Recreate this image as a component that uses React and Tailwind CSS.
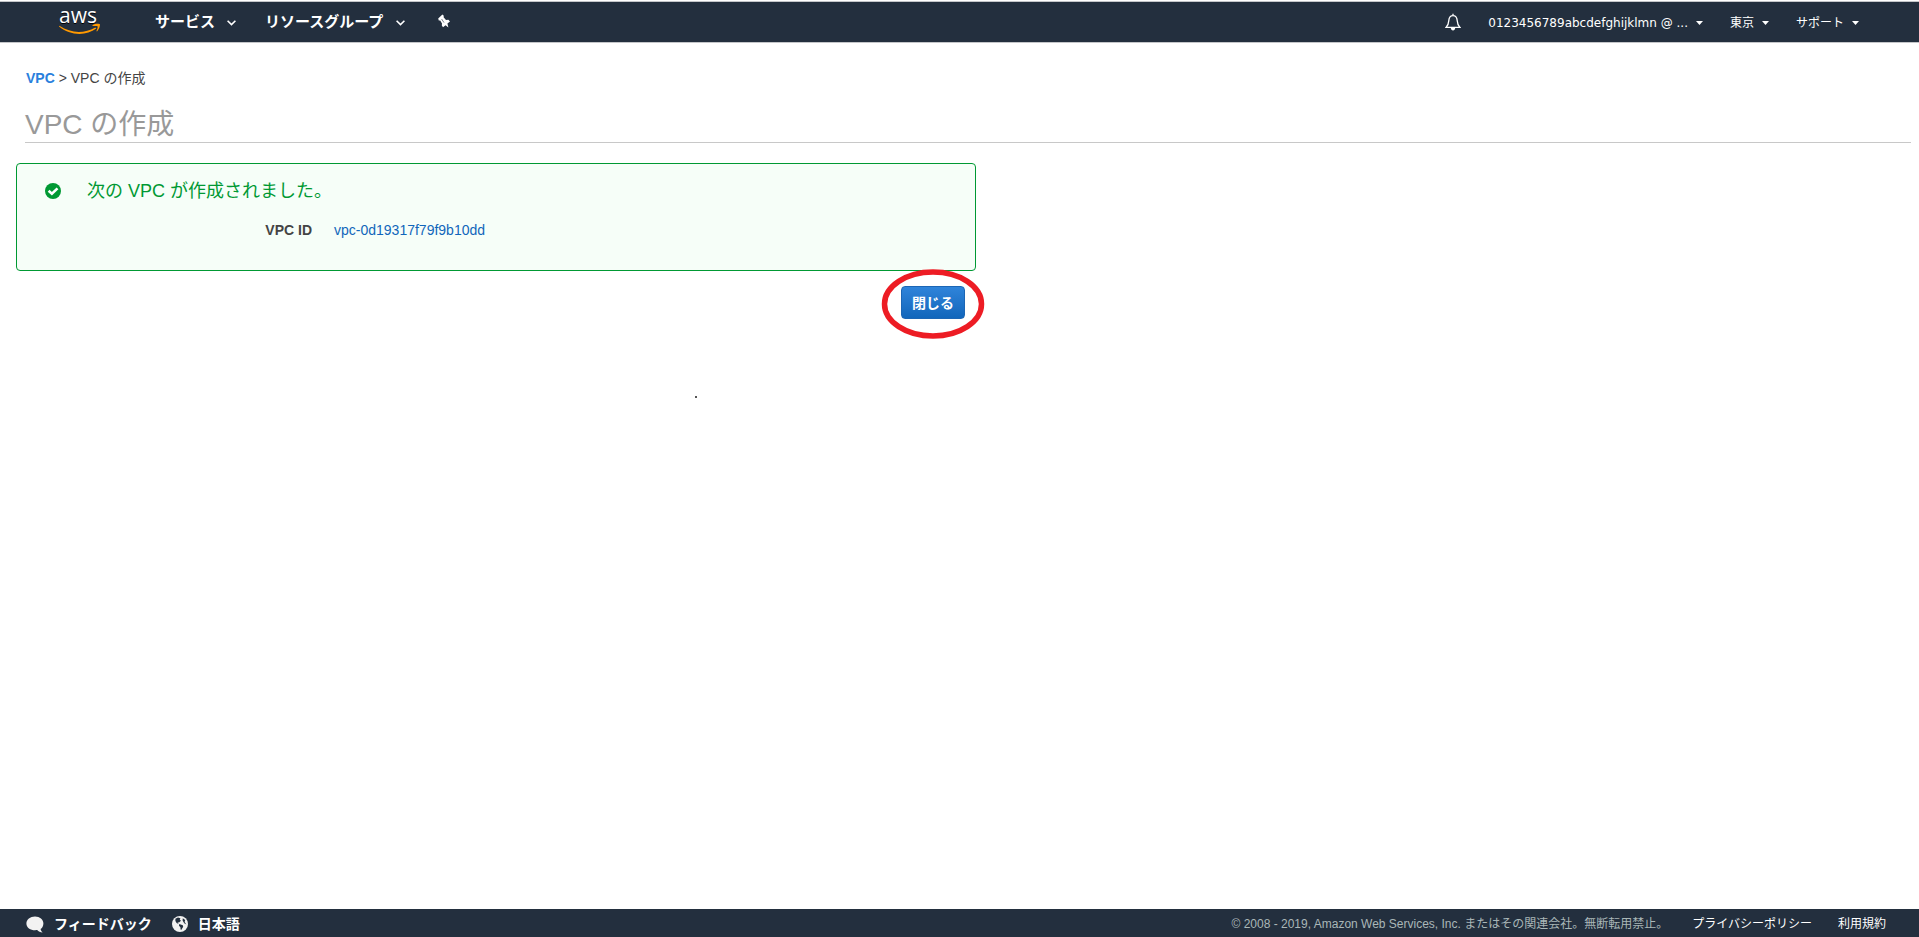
const navFont = "font-['Noto_Sans_CJK_JP',sans-serif]";
const accountFont = "font-['DejaVu_Sans','Noto_Sans_CJK_JP',sans-serif]";

function AwsLogo() {
    return (
        <svg viewBox="0 -4 44 42" className="h-[42px] w-11 overflow-visible font-normal" role="img" aria-label="aws">
            <text x="0" y="19" fill="#fff" fontSize="21" fontFamily="Open Sans, sans-serif">aws</text>
            <path d="M0.4 21.8 C12 29.4 25 29.8 36.3 23.4 L37.3 24.6 C27 32.4 11 31.8 0 22.6 Z" fill="#f90" />
            <path d="M33.4 21.2 C36 19.4 40.4 19.4 40.9 20.3 C41.3 21.2 40.2 25.4 38 27.4 L37.4 26.9 C38.4 25 39 22.8 38.6 22.3 C38.1 21.8 36 21.8 33.6 22.1 Z" fill="#f90" />
        </svg>
    );
}

function Chevron() {
    return (
        <svg viewBox="0 0 9 6" className="mt-1 h-1.5 w-[9px]" fill="none" stroke="#fff" strokeWidth="1.6">
            <path d="M0.6 0.8 L4.5 4.6 L8.4 0.8" />
        </svg>
    );
}

function Caret() {
    return (
        <svg viewBox="0 0 7 4" className="h-1 w-[7px]" fill="#fff">
            <path d="M0 0 H7 L3.5 4 Z" />
        </svg>
    );
}

function PinIcon() {
    return (
        <svg viewBox="0 0 14 14" className="h-3.5 w-3.5" fill="#fff">
            <path d="M1.2 4.4 L5.4 0.6 L6.8 1.8 L6.6 3.2 L9 6 L11.4 5.8 L13 7.4 L10.4 9.6 L11.4 13.6 L8.6 11.2 L6 13.2 L4.8 11.6 L5 9.6 L3.2 6.6 L1.8 6.4 Z" />
            <path d="M4.6 5 L7 8.6" fill="none" stroke="#232f3e" strokeWidth="0.6" />
        </svg>
    );
}

function BellIcon() {
    return (
        <svg viewBox="0 0 16 18" className="h-[18px] w-4" fill="none" stroke="#fff" strokeWidth="1.3">
            <path d="M8 0.8 V2.4 M1 14.4 C3.2 12.4 3.6 11.4 3.8 7.6 C4 4.4 5.6 2.6 8 2.6 C10.4 2.6 12 4.4 12.2 7.6 C12.4 11.4 12.8 12.4 15 14.4 Z" />
            <path d="M5.8 15 H10.2 C10.2 18.2 5.8 18.2 5.8 15 Z" fill="#fff" stroke="none" />
        </svg>
    );
}

function CheckIcon() {
    return (
        <svg viewBox="0 0 16 16" className="h-4 w-4">
            <circle cx="8" cy="8" r="8" fill="#093" />
            <path d="M3.6 7.8 L6.9 10.8 L12.5 5.4" fill="none" stroke="#fff" strokeWidth="2.6" />
        </svg>
    );
}

function BubbleIcon() {
    return (
        <svg viewBox="0 0 18 17" className="h-[17px] w-[18px]" fill="#f2f2f2">
            <path d="M9 0.6 C13.8 0.6 17.4 3.6 17.4 7.4 C17.4 10 16 12 14.6 13 C14.8 14.4 15.6 15.6 16.6 16.4 C14.4 16.4 12.4 15.4 11.2 14 C5.4 14.8 0.4 12.2 0.4 7.4 C0.4 3.6 4.2 0.6 9 0.6 Z" />
        </svg>
    );
}

function GlobeIcon() {
    return (
        <svg viewBox="0 0 16 16" className="h-4 w-4">
            <circle cx="8" cy="8" r="8" fill="#f2f2f2" />
            <path d="M3.4 2.8 L6 1.6 L8.4 2.2 L7.8 3.8 L9 4.8 L7 6.4 L5.6 6.2 L6.6 8 L4.6 7 L3.4 5 Z M7.2 8 L10.8 9.2 L11.2 10.8 L9.2 14 L8.6 13.4 L8.4 11.2 L7 9.8 Z M10.8 2.2 L13.2 4 L12.6 6 L14.4 8.4 L12.2 7.2 L10.6 4.4 Z" fill="#232f3e" />
        </svg>
    );
}

const userMenus = ['0123456789abcdefghijklmn @ ...', '東京', 'サポート'];

function Header() {
    return (
        <header className={`flex h-[42px] items-center justify-between border-y border-[#c4c6c9] bg-[#232f3e] pr-[60px] pl-[59px] text-white [text-shadow:0_1px_0_#000] ${navFont}`}>
            <nav className="flex items-center pb-0.5 text-[15px] leading-5 font-bold">
                <a href="#home"><AwsLogo /></a>
                <button type="button" className="ml-[52px] flex items-center gap-3">サービス<Chevron /></button>
                <button type="button" className="ml-[29px] flex items-center gap-[13px]">リソースグループ<Chevron /></button>
                <button type="button" aria-label="ピン留め" className="ml-8"><PinIcon /></button>
            </nav>
            <div className={`flex items-center gap-[27px] text-xs ${accountFont}`}>
                <button type="button" aria-label="通知"><BellIcon /></button>
                {userMenus.map((label) => (
                    <button key={label} type="button" className="flex items-center gap-2 pt-0.5">
                        {label}
                        <Caret />
                    </button>
                ))}
            </div>
        </header>
    );
}

function SuccessPanel() {
    return (
        <section className="h-[108px] rounded border border-[#093] bg-[#f6fef8] px-7 pt-[15px]">
            <div className="flex items-center gap-[26px]">
                <CheckIcon />
                <h2 className="text-lg leading-6 text-[#093]">次の VPC が作成されました。</h2>
            </div>
            <dl className="mt-[17px] flex gap-[22px] text-sm leading-5">
                <dt className="w-[267px] text-right font-bold text-[#444]">VPC ID</dt>
                <dd><a href="#vpc" className="text-[#1166bb]">vpc-0d19317f79f9b10dd</a></dd>
            </dl>
        </section>
    );
}

function Footer() {
    return (
        <footer className="flex h-7 items-center justify-between bg-[#232f3e] pt-0.5 pr-[33px] pl-[26px] font-['Liberation_Sans','Noto_Sans_CJK_JP',sans-serif] text-xs text-white">
            <div className="flex items-center gap-5 text-sm font-bold [text-shadow:0_1px_0_#000]">
                <button type="button" className="flex items-center gap-2.5"><BubbleIcon />フィードバック</button>
                <button type="button" className="flex items-center gap-2.5"><GlobeIcon />日本語</button>
            </div>
            <div className="flex items-center gap-[26px]">
                <p className="-mr-0.5 text-[#aab7b8]">© 2008 - 2019, Amazon Web Services, Inc. またはその関連会社。無断転用禁止。</p>
                <a href="#privacy">プライバシーポリシー</a>
                <a href="#terms">利用規約</a>
            </div>
        </footer>
    );
}

export default function App() {
    return (
        <div className="relative flex min-h-screen flex-col bg-white pt-px font-['Liberation_Sans','Noto_Sans_CJK_JP',sans-serif] text-[#444]">
            <Header />
            <main className="flex-1">
                <nav className="pt-[25px] pl-[26px] text-sm leading-5">
                    <a href="#vpcs" className="font-bold text-[#2a80dd]">VPC</a> &gt; VPC の作成
                </nav>
                <h1 className="mt-5 mr-2 ml-[25px] border-b border-[#c8c8c8] text-[28px] leading-[34px] text-[#999]">VPC の作成</h1>
                <div className="mt-5 ml-4 w-[960px] max-w-full">
                    <SuccessPanel />
                    <div className="mt-[15px] mr-[11px] flex justify-end">
                        <div className="relative">
                            <button type="button" className="h-[33px] w-16 rounded border border-[#1c66b5] bg-linear-to-b from-[#2f84da] to-[#1166bb] text-sm font-bold text-white">閉じる</button>
                            <svg viewBox="0 0 104 70" className="pointer-events-none absolute -top-[17px] -left-5 h-[70px] w-[104px]" fill="none" stroke="#ed1c24" strokeWidth="5.5">
                                <ellipse cx="52" cy="35" rx="48.5" ry="32" />
                            </svg>
                        </div>
                    </div>
                </div>
            </main>
            <span aria-hidden="true" className="absolute top-[396px] left-[695px] h-0.5 w-0.5 bg-[#555]" />
            <Footer />
        </div>
    );
}
